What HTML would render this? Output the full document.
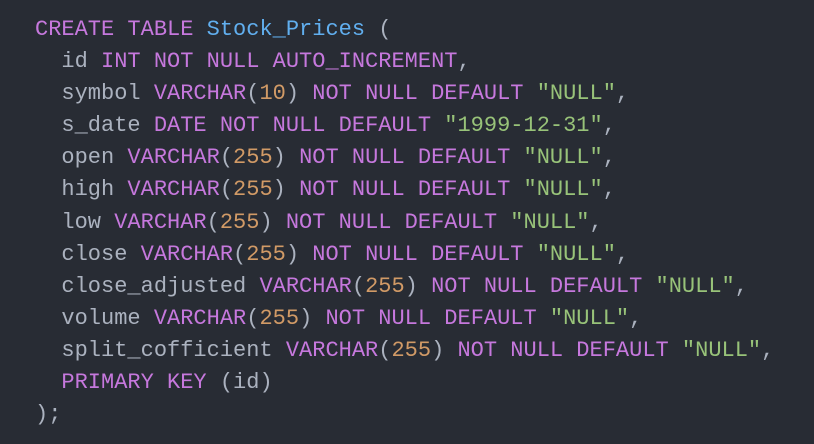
<!DOCTYPE html>
<html><head><style>
html,body{margin:0;padding:0;}
body{width:814px;height:444px;background:#282c34;overflow:hidden;position:relative;}
pre{position:absolute;left:35px;top:14px;margin:0;font-family:"Liberation Mono",monospace;font-size:22px;line-height:32.1px;color:#abb2bf;}
.k{color:#c678dd}.b{color:#61afef}.n{color:#d19a66}.s{color:#98c379}
</style></head><body>
<pre><span class="k">CREATE TABLE</span> <span class="b">Stock_Prices</span> (
  id <span class="k">INT NOT NULL AUTO_INCREMENT</span>,
  symbol <span class="k">VARCHAR</span>(<span class="n">10</span>) <span class="k">NOT NULL DEFAULT</span> <span class="s">"NULL"</span>,
  s_date <span class="k">DATE NOT NULL DEFAULT</span> <span class="s">"1999-12-31"</span>,
  open <span class="k">VARCHAR</span>(<span class="n">255</span>) <span class="k">NOT NULL DEFAULT</span> <span class="s">"NULL"</span>,
  high <span class="k">VARCHAR</span>(<span class="n">255</span>) <span class="k">NOT NULL DEFAULT</span> <span class="s">"NULL"</span>,
  low <span class="k">VARCHAR</span>(<span class="n">255</span>) <span class="k">NOT NULL DEFAULT</span> <span class="s">"NULL"</span>,
  close <span class="k">VARCHAR</span>(<span class="n">255</span>) <span class="k">NOT NULL DEFAULT</span> <span class="s">"NULL"</span>,
  close_adjusted <span class="k">VARCHAR</span>(<span class="n">255</span>) <span class="k">NOT NULL DEFAULT</span> <span class="s">"NULL"</span>,
  volume <span class="k">VARCHAR</span>(<span class="n">255</span>) <span class="k">NOT NULL DEFAULT</span> <span class="s">"NULL"</span>,
  split_cofficient <span class="k">VARCHAR</span>(<span class="n">255</span>) <span class="k">NOT NULL DEFAULT</span> <span class="s">"NULL"</span>,
  <span class="k">PRIMARY KEY</span> (id)
);</pre>
</body></html>
